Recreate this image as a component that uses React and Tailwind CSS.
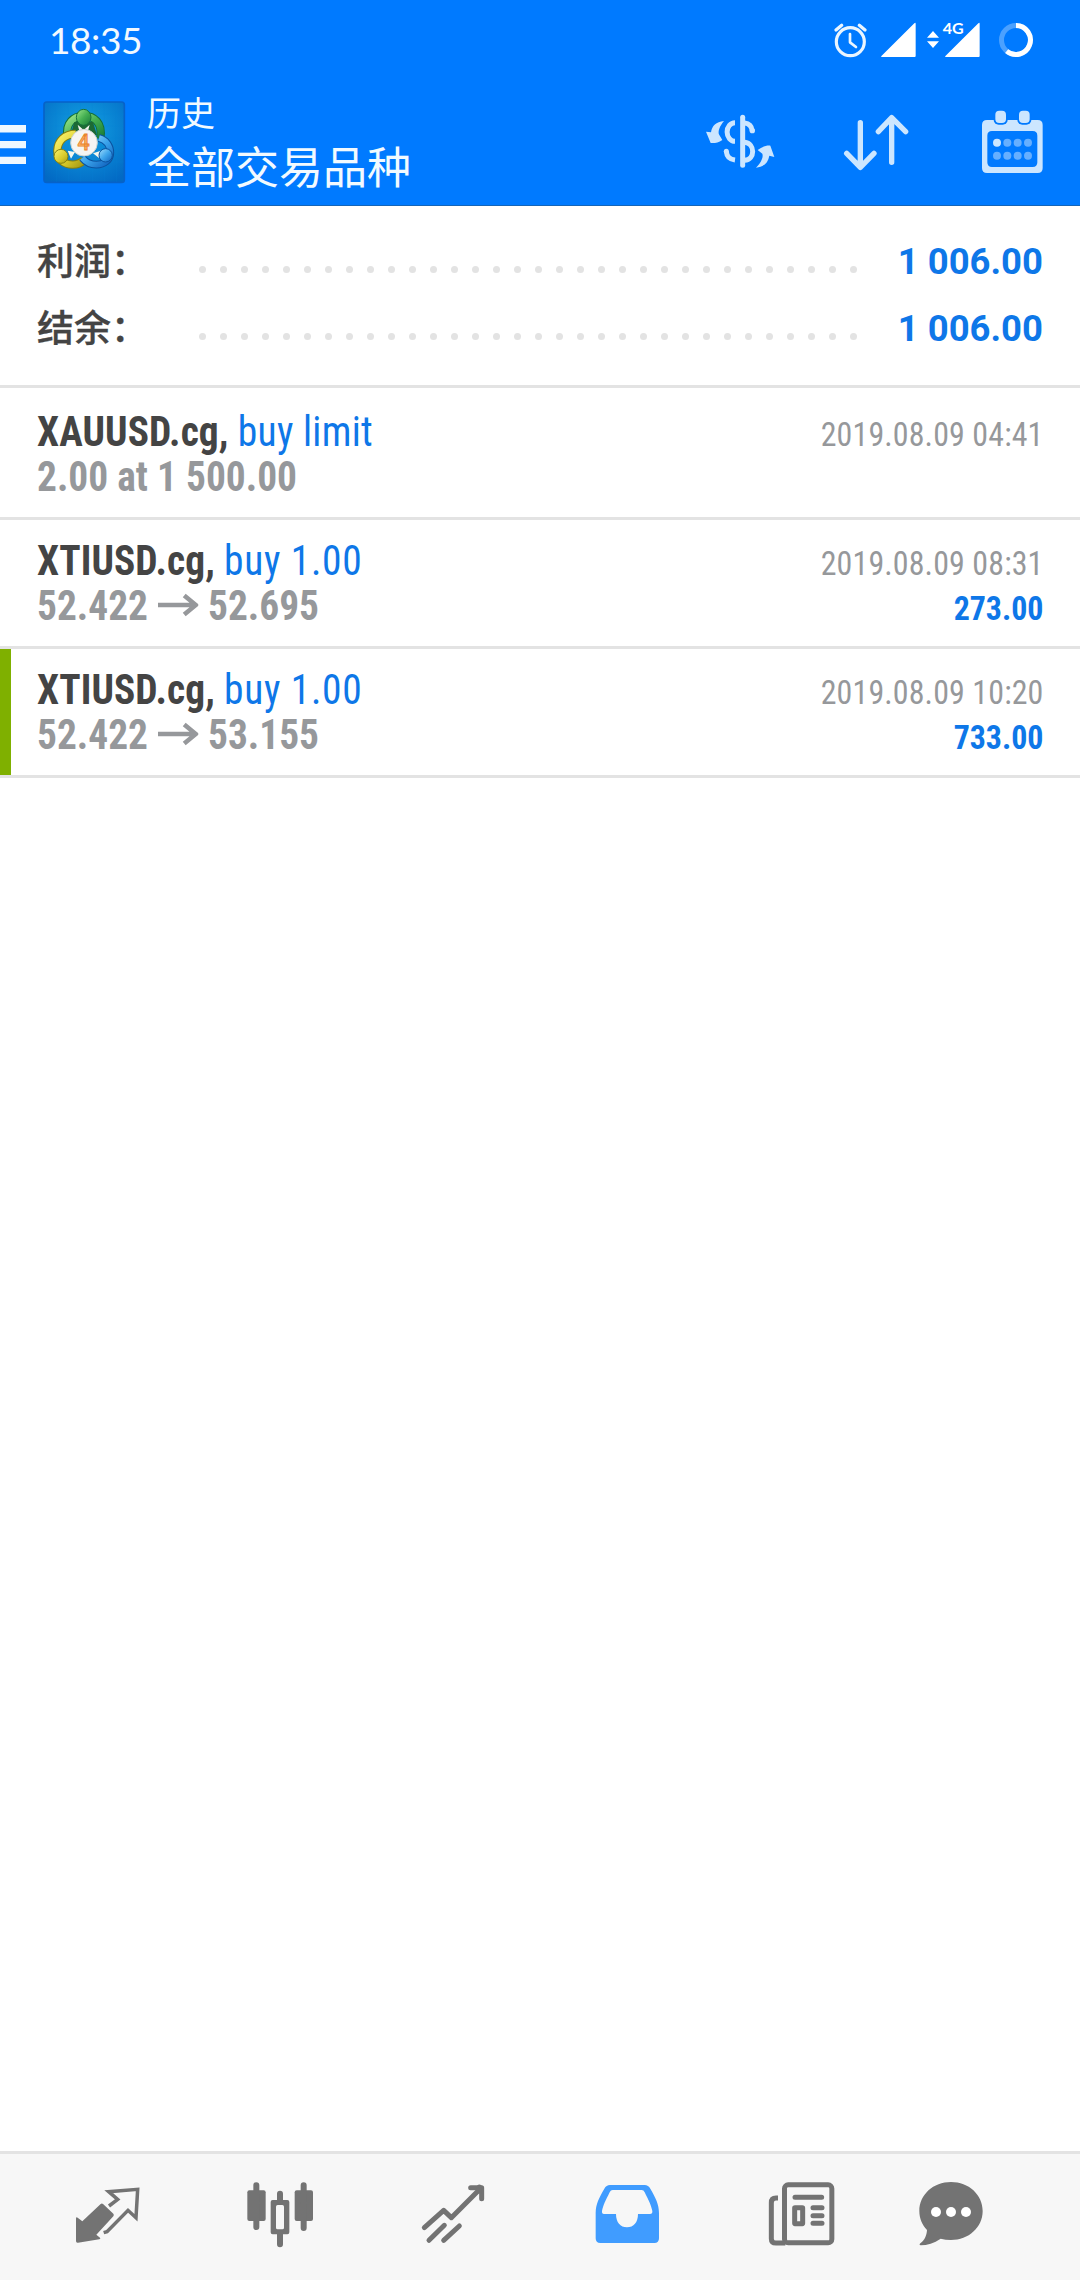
const deals = [
  { id: 1, symbol: "XAUUSD.cg", side: "buy limit", note: "2.00 at 1 500.00", time: "2019.08.09 04:41" },
  { id: 2, symbol: "XTIUSD.cg", side: "buy 1.00", open: "52.422", close: "52.695", time: "2019.08.09 08:31", profit: "273.00" },
  { id: 3, symbol: "XTIUSD.cg", side: "buy 1.00", open: "52.422", close: "53.155", time: "2019.08.09 10:20", profit: "733.00", marked: true },
];

const totals = [
  { label: "利润：", value: "1 006.00" },
  { label: "结余：", value: "1 006.00" },
];

function StatusBar() {
  return (
    <div className="flex h-20 items-center pl-[49px] pr-[46px]">
      <span className="font-['Lato',sans-serif] text-[37px] leading-[40px] tracking-[-0.4px] text-[#f2f9ff]">18:35</span>
      <div className="ml-auto flex items-center">
        <svg width="36" height="40" viewBox="39 60 108 120" fill="none" stroke="#eaf5ff" strokeLinecap="round">
          <circle cx="91" cy="125" r="42" strokeWidth="9.500" />
          <path d="M90 102v25l18 14" strokeWidth="8" strokeLinejoin="round" />
          <path d="M48 90l17-14M135 90l-17-14" strokeWidth="10" />
        </svg>
        <svg className="ml-[11px]" width="37" height="40" viewBox="180 60 111 120" fill="#fff">
          <path d="M283 70q4-4 4 2v96q0 3-3 3h-97q-6 0-2-4z" />
        </svg>
        <svg className="ml-2" width="56" height="40" viewBox="315 60 168 120" fill="#fff">
          <path d="M321 113l18-20 18 20zM321 124h36l-18 20z" />
          <path d="M475 70q4-4 4 2v96q0 3-3 3h-97q-6 0-2-4z" />
          <text x="368" y="102" fontFamily="Lato, sans-serif" fontWeight="700" fontSize="43" textLength="63" lengthAdjust="spacingAndGlyphs" stroke="#007aff" strokeWidth="8" paintOrder="stroke">4G</text>
        </svg>
        <svg className="ml-[17px]" width="36" height="40" viewBox="534 60 108 120" fill="none" strokeWidth="15">
          <circle cx="588" cy="120" r="43.5" stroke="#4ba1ff" />
          <path d="M588 76.500a43.500 43.500 0 1 1-28 77" stroke="#fff" />
        </svg>
      </div>
    </div>
  );
}

function Logo() {
  return (
    <svg className="ml-[17px]" width="83" height="83" viewBox="24 21 249 249">
      <defs>
        <radialGradient id="tile" cx="50%" cy="35%" r="75%">
          <stop offset="0" stopColor="#12a3e4" />
          <stop offset="1" stopColor="#0269c4" />
        </radialGradient>
        <linearGradient id="green" x1="0" y1="0" x2="1" y2="1">
          <stop offset="0" stopColor="#9be58a" />
          <stop offset=".5" stopColor="#45b052" />
          <stop offset="1" stopColor="#177a38" />
        </linearGradient>
        <linearGradient id="yellow" x1="0" y1="0" x2="1" y2="1">
          <stop offset="0" stopColor="#fbf36a" />
          <stop offset=".6" stopColor="#d8c92a" />
          <stop offset="1" stopColor="#a39a15" />
        </linearGradient>
        <linearGradient id="blue" x1="0" y1="0" x2="1" y2="1">
          <stop offset="0" stopColor="#a4defc" />
          <stop offset=".5" stopColor="#3da5ec" />
          <stop offset="1" stopColor="#0f62be" />
        </linearGradient>
      </defs>
      <rect x="27" y="24" width="241" height="241" rx="8" fill="url(#tile)" stroke="#0762c8" strokeWidth="5" />
      <path d="M28 60h239M28 96h239M28 132h239M28 168h239M28 204h239M64 26v238M100 26v238M136 26v238M172 26v238M208 26v238M244 26v238" stroke="#0a86dc" strokeWidth="1" opacity=".5" />
      <path d="M98 128C90 88 116 66 146 66s58 18 50 68" fill="none" stroke="#157036" strokeWidth="25" />
      <path d="M98 128C90 88 116 66 146 66s58 18 50 68" fill="none" stroke="url(#green)" strokeWidth="19" />
      <path d="M118 84h56l12 40-78-6z" fill="#1c6a34" />
      <path d="M122 120c-34 0-54 22-55 50 0 26 20 42 46 42 16 0 26-6 34-14" fill="none" stroke="#857e10" strokeWidth="25" />
      <path d="M122 120c-34 0-54 22-55 50 0 26 20 42 46 42 16 0 26-6 34-14" fill="none" stroke="url(#yellow)" strokeWidth="19" />
      <path d="M192 132c22 6 34 24 34 44 0 22-18 36-42 36-20 0-32-8-42-20" fill="none" stroke="#0b529f" strokeWidth="23" />
      <path d="M192 132c22 6 34 24 34 44 0 22-18 36-42 36-20 0-32-8-42-20" fill="none" stroke="url(#blue)" strokeWidth="17" />
      <path d="M128 92l18 16 18-16-6 22h-24z" fill="#f3f7ee" />
      <path d="M98 170l22 4-12 20zM174 178l24-8-6 22z" fill="#f3f7ee" />
      <ellipse cx="146" cy="70" rx="22" ry="24" fill="url(#green)" stroke="#15723a" strokeWidth="3" />
      <circle cx="78" cy="187" r="21" fill="url(#yellow)" stroke="#86800f" strokeWidth="3" />
      <circle cx="212" cy="184" r="20" fill="url(#blue)" stroke="#0b539f" strokeWidth="3" />
      <circle cx="147" cy="146" r="40" fill="#f6f5f3" stroke="#cdd3cf" strokeWidth="3" />
      <text x="146" y="168" textAnchor="middle" fontFamily="Roboto, sans-serif" fontWeight="500" fontSize="64" fill="#ffb066" stroke="#e8832a" strokeWidth="2.500">4</text>
    </svg>
  );
}

function Toolbar() {
  return (
    <div className="flex h-[125px] items-center pr-[28px]">
      <svg className="mt-[3px]" width="26" height="40" viewBox="0 0 26 40" fill="#eef7ff">
        <path d="M0 1h26v7.500H0zM0 17h26v7.300H0zM0 32.700h26V40H0z" />
      </svg>
      <Logo />
      <div className="-mt-[4px] ml-[21px] font-['Noto_Sans_CJK_SC',sans-serif] text-[#f2faff]">
        <div className="text-[34px] leading-[48px]">历史</div>
        <div className="text-[44px] leading-[58px]">全部交易品种</div>
      </div>
      <div className="ml-auto flex gap-14">
        <svg width="80" height="75" viewBox="60 45 240 225" fill="none" stroke="#cce6ff">
          <path d="M188 82v144" strokeWidth="15" strokeLinecap="round" />
          <path d="M165 98a22 26 0 0 0 0 56" strokeWidth="15" />
          <path d="M139 184c1 14 10 24 26 26" strokeWidth="15" />
          <circle cx="139" cy="184" r="7.5" fill="#cce6ff" stroke="none" />
          <path d="M194 99c12 1 21 9 23 24" strokeWidth="15" />
          <circle cx="217" cy="122" r="8" fill="#cce6ff" stroke="none" />
          <path d="M194 157c32 4 32 52 0 54" strokeWidth="15" />
          <path d="M132 93c-24 3-36 14-39 34l-15-2 14 34c12 1 23-1 35-9l-9-15c-6-10 2-28 14-42z" fill="#cce6ff" stroke="none" />
          <path d="M228 233c24-3 36-14 40-36l15 4-12-34c-12-1-24 3-38 13l14 11c4 12-5 28-19 42z" fill="#cce6ff" stroke="none" />
        </svg>
        <svg width="80" height="75" viewBox="468 45 240 225" fill="none" stroke="#cce6ff" strokeWidth="16" strokeLinecap="round" strokeLinejoin="round">
          <path d="M541 98v134M500 190l41 42 41-42M635 217V83M595 125l40-42 42 42" />
        </svg>
        <svg width="80" height="75" viewBox="876 45 240 225">
          <path fillRule="evenodd" fill="#cce6ff" d="M921 90h152q15 0 15 15v129q0 15-15 15H921q-15 0-15-15V105q0-15 15-15zM936 123q-14 0-14 14v80q0 14 14 14h122q14 0 14-14v-80q0-14-14-14z" />
          <rect x="941" y="57" width="42" height="47" rx="15" fill="#007aff" />
          <rect x="1012" y="57" width="42" height="47" rx="15" fill="#007aff" />
          <rect x="946" y="62" width="32" height="37" rx="12" fill="#cce6ff" />
          <rect x="1017" y="62" width="32" height="37" rx="12" fill="#cce6ff" />
          <circle cx="951" cy="158" r="12" fill="#cce6ff" />
          <g fill="#66afff">
            <circle cx="982" cy="158" r="12" />
            <circle cx="1013" cy="158" r="12" />
            <circle cx="1044" cy="158" r="12" />
            <circle cx="951" cy="197" r="12" />
            <circle cx="982" cy="197" r="12" />
            <circle cx="1013" cy="197" r="12" />
            <circle cx="1044" cy="197" r="12" />
          </g>
        </svg>
      </div>
    </div>
  );
}

function TotalRow({ label, value }) {
  return (
    <div className="flex h-[67px] items-center">
      <span className="-mt-[6px] w-[162px] font-['Noto_Sans_CJK_SC',sans-serif] text-[37px] leading-[54px] font-medium text-[#444] [-webkit-text-stroke:0.3px_#444]">{label}</span>
      <div className="mt-[15px] flex w-[658px] justify-between">
        {Array.from({ length: 32 }, (_, i) => (
          <span key={i} className="size-[7px] rounded-full bg-[#e3e3e3]" />
        ))}
      </div>
      <span className="mt-px ml-auto text-[36.5px] font-bold text-[#0e77e8]">{value}</span>
    </div>
  );
}

function DealRow({ deal }) {
  return (
    <div className={`flex h-[129px] justify-between border-b-3 border-[#e3e3e3] pr-[37px] ${deal.marked ? "bg-[linear-gradient(to_right,#7fb000_10.500px,transparent_10.500px)]" : ""}`}>
      <div className="ml-[37px] origin-left scale-x-[0.938] pt-[18px] text-[42px] leading-[45px] font-stretch-condensed">
        <div className="whitespace-pre">
          <span className="tracking-[0.12px] font-bold text-[#444]">{deal.symbol}, </span>
          <span className={`text-[#0e77e8] ${deal.note ? "tracking-[0.35px]" : "tracking-[0.75px]"}`}>{deal.side}</span>
        </div>
        {deal.note ? (
          <div className="font-bold text-[#96989b]">{deal.note}</div>
        ) : (
          <div className="flex items-center font-bold text-[#96989b]">
            {deal.open}
            <svg className="mx-[10.5px]" width="43" height="26" viewBox="0 0 40 26" preserveAspectRatio="none" fill="none" stroke="#96989b" strokeWidth="4.500">
              <path d="M0 12h38M26 2.500l11.500 9.500L26 21.500" />
            </svg>
            {deal.close}
          </div>
        )}
      </div>
      <div className="origin-right scale-x-[0.938] pt-[21px] text-right text-[34px] leading-[45px] font-stretch-condensed">
        <div className="tracking-[0.15px] text-[#96989b]">{deal.time}</div>
        <div className="font-bold text-[#0e77e8]">{deal.profit}</div>
      </div>
    </div>
  );
}

function BottomNav() {
  return (
    <nav className="flex h-[129px] gap-[101px] border-t-3 border-[#e3e3e3] bg-[#f7f7f7] pt-[22px] pl-[72px]">
      <svg width="72" height="72" viewBox="96 108 216 216" fill="#737373">
        <path d="M182 192q4-3 8 1l30 28q3 4 0 8l-51 55 11 9q3 4-2 5l-64 10q-6 1-6-5v-67q0-6 5-3l14 11z" />
        <path d="M207 198l26-20-27-23 87-7-5 85-24-22-63 64-10 3" fill="none" stroke="#737373" strokeWidth="10.500" />
      </svg>
      <svg width="72" height="72" viewBox="615 108 216 216" fill="#737373">
        <rect x="622" y="151" width="55" height="92" rx="6" />
        <rect x="764" y="151" width="55" height="92" rx="6" />
        <path fillRule="evenodd" d="M698 180h44q6 0 6 6v91q0 6-6 6h-44q-6 0-6-6v-91q0-6 6-6zM713 195q-5 0-5 5v63q0 5 5 5h14q5 0 5-5v-63q0-5-5-5z" />
        <path d="M649 136v125M791 136v128M720 161v22M720 280v33" stroke="#737373" strokeWidth="18" strokeLinecap="round" />
      </svg>
      <svg width="72" height="72" viewBox="1134 108 216 216" fill="none" stroke="#737373" strokeWidth="15" strokeLinecap="round" strokeLinejoin="round">
        <path d="M1153 263l58-52 23 22 86-86M1167 301l46-45M1211 301l47-43" />
        <path d="M1292 143h33v33" strokeWidth="15" />
        <path d="M1318 141v12" />
      </svg>
      <svg width="72" height="72" viewBox="93 108 216 216" fill="#409cff">
        <path fillRule="evenodd" d="M150 135h104q11 0 17 11c16 28 26 46 26 73v76q0 14-14 14H121q-14 0-14-14v-76c0-27 10-45 26-73q6-11 17-11zM158 150q-6 0-9 7c-12 24-20 40-23 56q-1 9 6 9h36c0 25 13 40 33 40s33-15 33-40h36q8 0 7-9c-3-16-11-32-23-56q-3-7-9-7z" />
      </svg>
      <svg width="72" height="72" viewBox="612 108 216 216" fill="none" stroke="#737373">
        <rect x="673.500" y="134.500" width="142" height="174" rx="11" strokeWidth="15" />
        <path d="M654 174h-6q-14 0-14 14v108q0 13 14 13h28" strokeWidth="15" />
        <path d="M705 172h80M759 203h27M759 227h27M759 250h27" strokeWidth="15" strokeLinecap="round" />
        <rect x="704" y="203" width="24" height="48" rx="1" strokeWidth="15" strokeLinejoin="round" />
      </svg>
      <svg className="-ml-[22px]" width="72" height="72" viewBox="1065 108 216 216" fill="#737373">
        <path d="M1173 126c53 0 95 38 95 87s-42 87-95 87q-17 0-31-4c-20 14-40 20-60 20q-6-1-1-6c14-11 19-24 20-40-14-15-23-34-23-57 0-49 42-87 95-87z" />
        <g fill="#fff">
          <circle cx="1128" cy="216" r="15" />
          <circle cx="1173" cy="216" r="15" />
          <circle cx="1218" cy="216" r="15" />
        </g>
      </svg>
    </nav>
  );
}

export default function App() {
  return (
    <div className="flex h-[2280px] w-[1080px] flex-col bg-white font-['Roboto',sans-serif]">
      <header className="border-b border-[#1565b8] bg-[#007aff]">
        <StatusBar />
        <Toolbar />
      </header>
      <section className="h-[182px] border-b-3 border-[#e3e3e3] pt-[22px] pr-[37px] pl-[37px]">
        {totals.map((row) => (
          <TotalRow key={row.label} label={row.label} value={row.value} />
        ))}
      </section>
      <main className="flex-1 pt-[3px]">
        {deals.map((deal) => (
          <DealRow key={deal.id} deal={deal} />
        ))}
      </main>
      <BottomNav />
    </div>
  );
}
